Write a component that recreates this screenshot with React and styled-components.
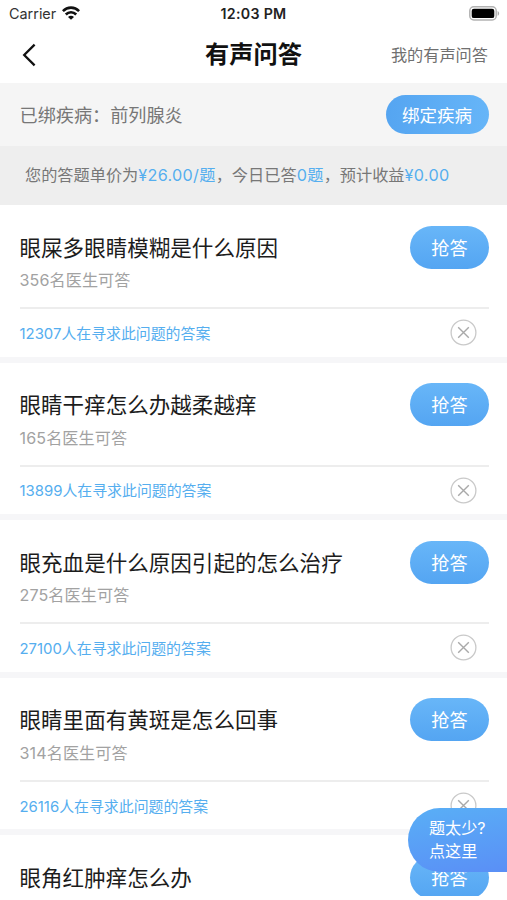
import styled, { createGlobalStyle } from "styled-components"

const questions = [
    { id: 1, title: '眼屎多眼睛模糊是什么原因', doctors: 356, seekers: 12307 },
    { id: 2, title: '眼睛干痒怎么办越柔越痒', doctors: 165, seekers: 13899 },
    { id: 3, title: '眼充血是什么原因引起的怎么治疗', doctors: 275, seekers: 27100 },
    { id: 4, title: '眼睛里面有黄斑是怎么回事', doctors: 314, seekers: 26116 },
    { id: 5, title: '眼角红肿痒怎么办' },
]

export default function App() {
    return (
        <Screen>
            <GlobalStyle />
            <StatusBar>
                <Carrier>Carrier <WifiIcon /></Carrier>
                <Clock>12:03 PM</Clock>
                <BatteryIcon />
            </StatusBar>
            <NavBar>
                <BackButton aria-label="返回">
                    <svg width="14" height="24" viewBox="0 0 14 24" fill="none" stroke="#111" strokeWidth="2.3">
                        <path d="M12.6 1.6 L2.2 12 L12.6 22.4" />
                    </svg>
                </BackButton>
                <PageTitle>有声问答</PageTitle>
                <NavLink>我的有声问答</NavLink>
            </NavBar>
            <DiseaseBar>
                <span>已绑疾病：前列腺炎</span>
                <BindButton>绑定疾病</BindButton>
            </DiseaseBar>
            <IncomeBar>
                您的答题单价为<b>¥26.00/题</b>，今日已答<b>0题</b>，预计收益<b>¥0.00</b>
            </IncomeBar>
            <QuestionList>
                {questions.map(question => <Question key={question.id} {...question} />)}
            </QuestionList>
            <MoreButton>题太少?<br />点这里</MoreButton>
        </Screen>
    )
}

function Question({ title, doctors, seekers }) {
    return (
        <QuestionCard>
            <QuestionTop>
                <div>
                    <QuestionTitle>{title}</QuestionTitle>
                    {doctors && <Doctors>{doctors}名医生可答</Doctors>}
                </div>
                <AnswerButton>抢答</AnswerButton>
            </QuestionTop>
            {seekers && <QuestionBottom>
                <span>{seekers}人在寻求此问题的答案</span>
                <CloseButton aria-label="关闭">
                    <svg width="27" height="27" viewBox="0 0 27 27" fill="none">
                        <circle cx="13.5" cy="13.5" r="12.4" stroke="#c9c9c9" strokeWidth="1.3" />
                        <path d="M8.2 8.2 L18.8 18.8 M18.8 8.2 L8.2 18.8" stroke="#a9a9a9" strokeWidth="1.4" />
                    </svg>
                </CloseButton>
            </QuestionBottom>}
        </QuestionCard>
    )
}

function WifiIcon() {
    return (
        <svg width="18" height="14" viewBox="0 0 18 14" fill="none" stroke="#111" strokeWidth="2.6">
            <path d="M0.9 5.1 C5.4 0.4 12.6 0.4 17.1 5.1" />
            <path d="M3.8 8.5 C6.7 5.5 11.3 5.5 14.2 8.5" />
            <path d="M9 13.8 L6 10.9 C7.8 9.3 10.2 9.3 12 10.9 Z" fill="#111" stroke="none" />
        </svg>
    )
}

function BatteryIcon() {
    return (
        <svg width="31" height="15" viewBox="0 0 31 15">
            <rect x="0.8" y="0.8" width="26.4" height="13.2" rx="4" fill="#fff" stroke="#b2b2b2" strokeWidth="1.5" />
            <rect x="2.7" y="2.7" width="22.6" height="9.4" rx="2.2" fill="#000" />
            <path d="M28.6 5 C30.6 5.8 30.6 9 28.6 9.8 Z" fill="#aaa" />
        </svg>
    )
}

const GlobalStyle = createGlobalStyle`
    * {
        box-sizing: border-box;
    }
    body {
        margin: 0;
        background: #fff;
        overflow: hidden;
    }
    button {
        border: none;
        padding: 0;
        background: none;
        font-family: inherit;
    }
`

const Screen = styled.main`
    position: relative;
    width: 507px;
    height: 900px;
    display: flex;
    flex-direction: column;
    overflow: hidden;
    background: #fff;
    font-family: Inter, 'Noto Sans CJK SC', sans-serif;
    white-space: nowrap;
`

const StatusBar = styled.header`
    flex: none;
    height: 27px;
    padding: 0 7px 0 9px;
    display: grid;
    grid-template-columns: 1fr auto 1fr;
    align-items: center;
    color: #222;
    > svg {
        justify-self: end;
    }
`

const Carrier = styled.div`
    display: flex;
    align-items: center;
    gap: 6px;
    font-size: 14.4px;
    color: #333;
    svg {
        margin-top: -2px;
    }
`

const Clock = styled.div`
    font-size: 14.2px;
    font-weight: 600;
    letter-spacing: 0.3px;
    margin-right: 2px;
`

const NavBar = styled.nav`
    flex: none;
    height: 56px;
    padding: 0 19px 0 22px;
    display: grid;
    grid-template-columns: 1fr auto 1fr;
    align-items: center;
`

const BackButton = styled.button`
    width: 14px;
    height: 24px;
    svg {
        display: block;
    }
`

const PageTitle = styled.h1`
    margin: 0 3px 0 0;
    font-size: 24.2px;
    font-weight: 600;
    line-height: 36px;
    color: #111;
`

const NavLink = styled.a`
    justify-self: end;
    margin-top: -2px;
    font-size: 16.2px;
    color: #707070;
`

const DiseaseBar = styled.section`
    flex: none;
    height: 62.5px;
    padding: 0 18px 0 19.5px;
    display: flex;
    align-items: center;
    justify-content: space-between;
    background: #f5f5f5;
    font-size: 18.15px;
    color: #777;
`

const BlueButton = styled.button`
    flex: none;
    color: #fff;
    border-radius: 22px;
`

const BindButton = styled(BlueButton)`
    width: 103px;
    height: 39px;
    padding-right: 1px;
    font-size: 17.5px;
    background: linear-gradient(90deg, #55a5f1, #66b5f8);
`

const IncomeBar = styled.section`
    flex: none;
    height: 59.5px;
    padding-left: 25px;
    line-height: 59px;
    background: #eeeeee;
    font-size: 16.2px;
    color: #777;
    b {
        font-weight: 400;
        letter-spacing: 0.3px;
        color: #55aeef;
    }
`

const QuestionList = styled.ul`
    flex: none;
    height: 691px;
    margin: 0;
    padding: 0;
    list-style: none;
    overflow: hidden;
`

const QuestionCard = styled.li`
    height: 157.6px;
    padding: 0 18px 0 19.5px;
    border-bottom: 6px solid #f6f6f8;
`

const QuestionTop = styled.div`
    height: 104px;
    padding-top: 20.5px;
    display: flex;
    justify-content: space-between;
    align-items: flex-start;
    border-bottom: 2px solid #ededed;
`

const QuestionTitle = styled.h2`
    margin: 6px 0 0;
    font-size: 21.55px;
    font-weight: 400;
    line-height: 32px;
    color: #1c1c1c;
`

const Doctors = styled.p`
    margin: 3.5px 0 0;
    font-size: 16.1px;
    line-height: 26px;
    letter-spacing: 0.1px;
    color: #a2a2a2;
`

const AnswerButton = styled(BlueButton)`
    width: 79px;
    height: 43px;
    padding-bottom: 1px;
    font-size: 18.2px;
    background: linear-gradient(180deg, #68b6f8, #54a5f2);
`

const QuestionBottom = styled.div`
    height: 46.6px;
    padding-right: 12px;
    display: flex;
    align-items: center;
    justify-content: space-between;
    font-size: 14.9px;
    color: #55aeef;
`

const CloseButton = styled.button`
    width: 27px;
    height: 27px;
    margin-top: 1px;
    svg {
        display: block;
    }
`

const MoreButton = styled.button`
    position: absolute;
    right: 0;
    top: 808px;
    width: 99px;
    height: 64px;
    && {
        padding-left: 21px;
    }
    border-radius: 32px 0 0 32px;
    background: linear-gradient(170deg, #59aff6, #5a8ff6);
    color: #fff;
    font-size: 16.1px;
    line-height: 23px;
    text-align: left;
`
